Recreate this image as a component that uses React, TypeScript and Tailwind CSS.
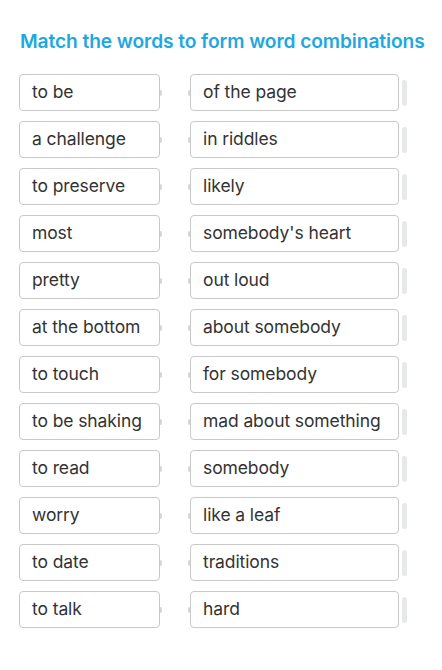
const pairs = [
  ['to be', 'of the page'],
  ['a challenge', 'in riddles'],
  ['to preserve', 'likely'],
  ['most', "somebody's heart"],
  ['pretty', 'out loud'],
  ['at the bottom', 'about somebody'],
  ['to touch', 'for somebody'],
  ['to be shaking', 'mad about something'],
  ['to read', 'somebody'],
  ['worry', 'like a leaf'],
  ['to date', 'traditions'],
  ['to talk', 'hard'],
];

export default function App() {
  return (
    <div className="min-h-[670px] w-[442px] bg-white font-['Inter',sans-serif]">
      <h1 className="pt-[29px] pl-5 text-[19.2px] font-semibold tracking-[-0.1px] text-[#1ea8e0] leading-6">
        Match the words to form word combinations
      </h1>
      <div className="mt-[21px] flex flex-col gap-[10px] pl-[19px]">
        {pairs.map(([left, right]) => (
          <div key={left} className="flex items-center">
            {/* left word */}
            <div className="flex h-[37px] w-[141px] items-center rounded border border-[#c9c9c9] pl-[12px] text-[17.5px] tracking-[-0.1px] text-[#333333] whitespace-nowrap">
              {left}
            </div>
            <div className="h-[6px] w-[2px] rounded-r-full bg-[#d6d6d6]" />
            <div className="w-[26px]" />
            <div className="h-[6px] w-[2px] rounded-l-full bg-[#d6d6d6]" />
            {/* right word */}
            <div className="flex h-[37px] w-[209px] items-center rounded border border-[#c9c9c9] pl-[12px] text-[17.5px] tracking-[-0.1px] text-[#333333] whitespace-nowrap">
              {right}
            </div>
            <div className="ml-[3px] h-[26px] w-[5px] rounded-full bg-[#e6e8ea]" />
          </div>
        ))}
      </div>
    </div>
  );
}
